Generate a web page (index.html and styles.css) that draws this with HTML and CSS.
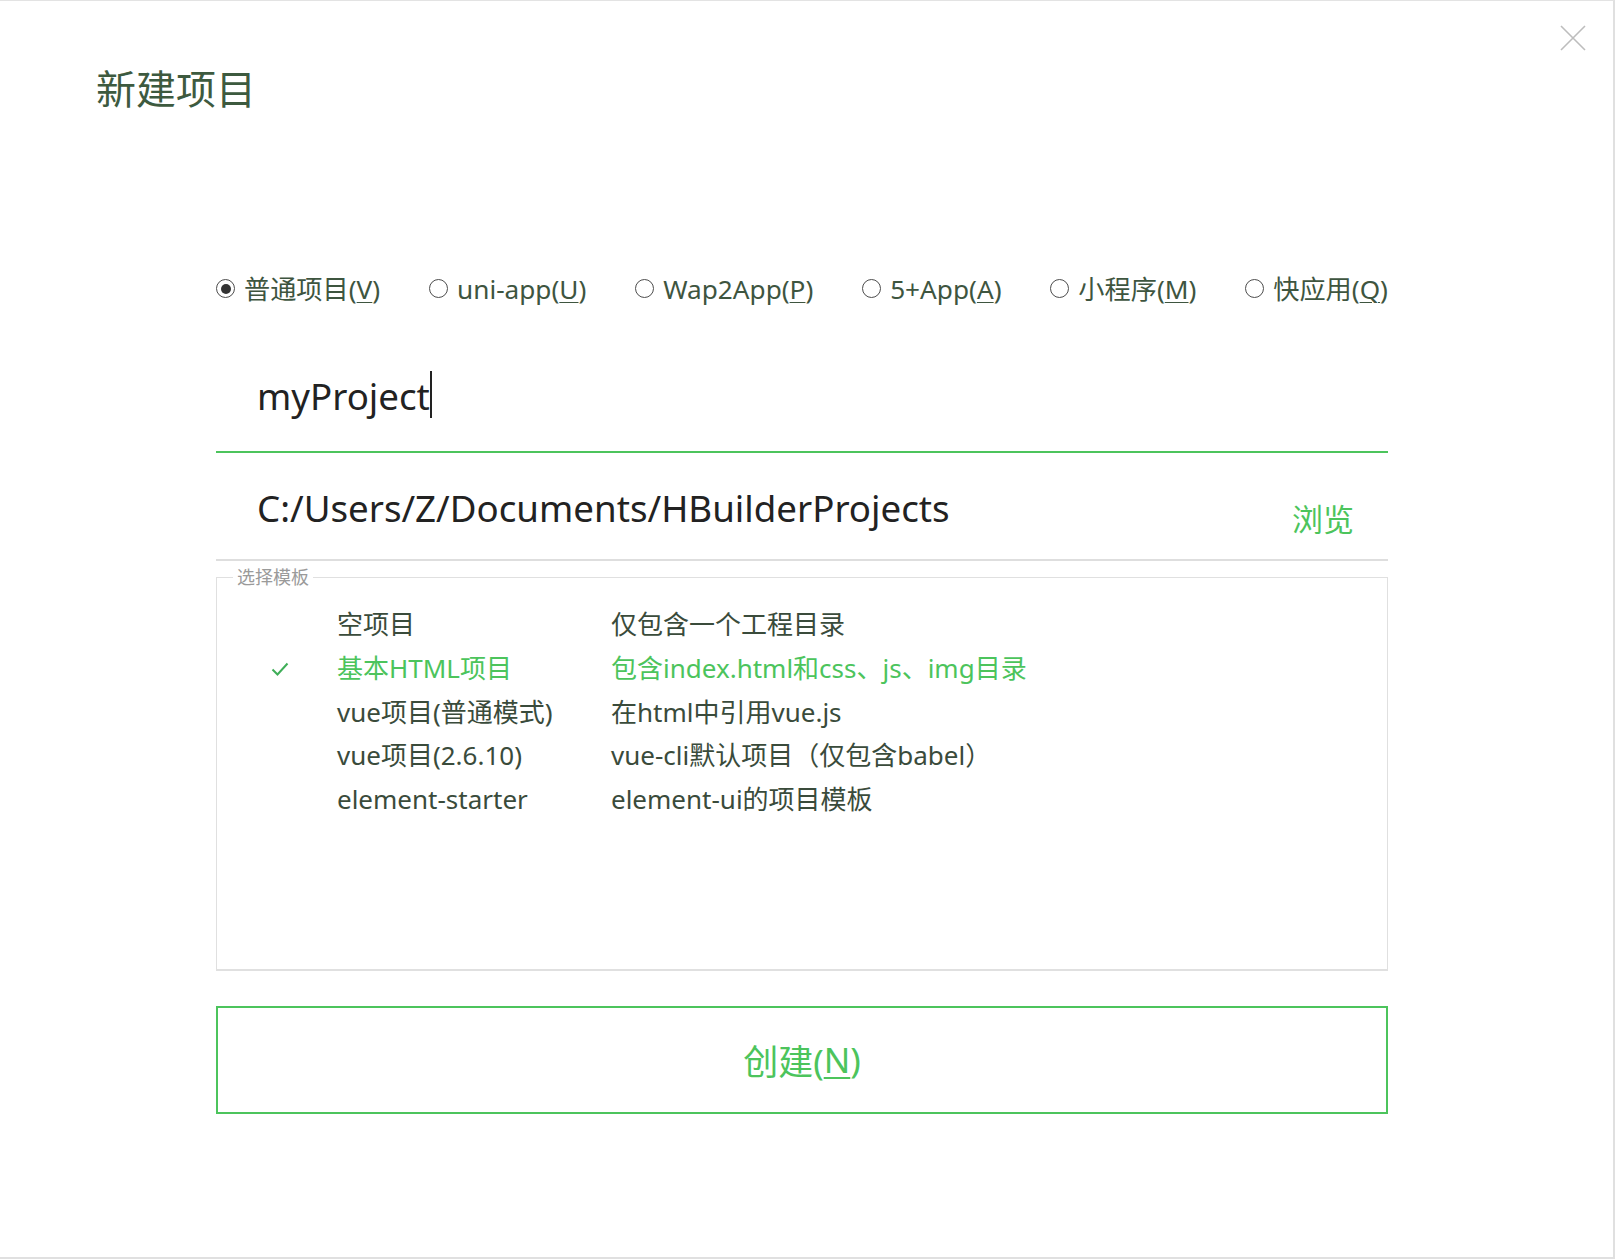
FILE: index.html
```html
<!DOCTYPE html>
<html lang="zh-CN">
<head>
<meta charset="utf-8">
<title>新建项目</title>
<link rel="stylesheet" href="styles.css">
</head>
<body>
<div class="dialog">
  <button class="close" aria-label="关闭">
    <svg width="26" height="26" viewBox="0 0 26 26"><path d="M1 1 L25 25 M25 1 L1 25" stroke="#bdbdbd" stroke-width="1.6" fill="none"/></svg>
  </button>
  <h1 class="title">新建项目</h1>
  <div class="content">
    <div class="radios">
      <label class="radio"><span class="dot checked"></span><span>普通项目(<u>V</u>)</span></label>
      <label class="radio"><span class="dot"></span><span>uni-app(<u>U</u>)</span></label>
      <label class="radio"><span class="dot"></span><span>Wap2App(<u>P</u>)</span></label>
      <label class="radio"><span class="dot"></span><span>5+App(<u>A</u>)</span></label>
      <label class="radio"><span class="dot"></span><span>小程序(<u>M</u>)</span></label>
      <label class="radio"><span class="dot"></span><span>快应用(<u>Q</u>)</span></label>
    </div>
    <div class="name-field"><span class="name-text">myProject</span><span class="caret"></span></div>
    <div class="path-field">
      <span class="path-text">C:/Users/Z/Documents/HBuilderProjects</span>
      <span class="browse">浏览</span>
    </div>
    <fieldset class="templates">
      <legend>选择模板</legend>
      <div class="row"><span class="check"></span><span>空项目</span><span>仅包含一个工程目录</span></div>
      <div class="row selected"><span class="check"><svg width="18" height="14" viewBox="0 0 18 14"><path d="M1.5 7.5 L6.5 12.5 L16.5 1.5" stroke="#3fae58" stroke-width="2" fill="none"/></svg></span><span>基本HTML项目</span><span>包含index.html和css、js、img目录</span></div>
      <div class="row"><span class="check"></span><span>vue项目(普通模式)</span><span>在html中引用vue.js</span></div>
      <div class="row"><span class="check"></span><span>vue项目(2.6.10)</span><span>vue-cli默认项目（仅包含babel）</span></div>
      <div class="row"><span class="check"></span><span>element-starter</span><span>element-ui的项目模板</span></div>
    </fieldset>
    <button class="create">创建(<u>N</u>)</button>
  </div>
</div>
</body>
</html>
```
FILE: styles.css
```css
html, body {
  margin: 0;
  padding: 0;
  background: #ffffff;
}
body {
  font-family: "Noto Sans", "Noto Sans CJK SC", sans-serif;
}
.dialog {
  position: relative;
  box-sizing: border-box;
  height: 1259px;
  width: 1615px;
  border-top: 1px solid #e3e3e3;
  border-right: 2px solid #e0e0e0;
  border-bottom: 2px solid #e0e0e0;
  background: #fff;
}
.close {
  position: absolute;
  top: 24px;
  right: 27px;
  width: 26px;
  height: 26px;
  padding: 0;
  border: 0;
  background: none;
  display: flex;
}
.title {
  margin: 62px 0 0 0;
  padding-left: 96px;
  font-size: 40px;
  line-height: 52px;
  font-weight: normal;
  color: #3d5a3f;
}
.content {
  margin-left: 216px;
  width: 1172px;
}
.radios {
  margin-top: 154px;
  height: 40px;
  display: flex;
  justify-content: space-between;
  align-items: center;
  font-size: 26.2px;
  line-height: 40px;
  color: #3e553f;
}
.radio {
  display: flex;
  align-items: center;
  gap: 9px;
}
.radio u {
  text-decoration-thickness: 1px;
  text-underline-offset: 3px;
}
.dot {
  box-sizing: border-box;
  width: 19px;
  height: 19px;
  border: 1.5px solid #4d4d4d;
  border-radius: 50%;
  display: flex;
  align-items: center;
  justify-content: center;
  margin-top: -1px;
}
.dot.checked::after {
  content: "";
  width: 10px;
  height: 10px;
  border-radius: 50%;
  background: #333;
}
.name-field {
  padding: 65px 0 33px 41px;
  font-size: 36.7px;
  line-height: 44px;
  color: #222;
  border-bottom: 2px solid #4cc45c;
}
.caret {
  display: inline-block;
  width: 2px;
  height: 47px;
  margin-top: -3px;
  margin-left: 0;
  vertical-align: -8px;
  background: #222;
}
.path-field {
  display: flex;
  justify-content: space-between;
  align-items: flex-start;
  padding: 33px 0 29px 41px;
  border-bottom: 2px solid #dedede;
}
.path-text {
  font-size: 36.7px;
  line-height: 44px;
  color: #222;
}
.browse {
  margin-top: 18px;
  margin-bottom: -5px;
  margin-right: 34px;
  font-size: 31px;
  line-height: 31px;
  color: #4cc45c;
}
.templates {
  margin: 7px 0 0 0;
  padding: 17px 0 147px 0;
  border: 1px solid #e0e0e0;
  border-bottom-width: 2px;
  min-width: 0;
}
.templates legend {
  margin-left: 16px;
  padding: 0 4px;
  font-size: 18px;
  line-height: 18px;
  color: #9a9a9a;
}
.row {
  display: grid;
  grid-template-columns: 66px 274px 1fr;
  align-items: center;
  padding-left: 54px;
  height: 43.75px;
  font-size: 26px;
  line-height: 43.75px;
  color: #3a4b3b;
}
.row.selected {
  color: #4cc45c;
}
.check {
  display: flex;
  align-items: center;
}
.create {
  display: flex;
  align-items: center;
  justify-content: center;
  box-sizing: border-box;
  width: 100%;
  height: 108px;
  margin-top: 35px;
  padding: 0;
  background: #fff;
  border: 2px solid #4cc45c;
  font-family: "Noto Sans", "Noto Sans CJK SC", sans-serif;
  font-size: 35px;
  color: #4cc45c;
}
.create u {
  text-decoration-thickness: 2px;
  text-underline-offset: 4px;
}
```
